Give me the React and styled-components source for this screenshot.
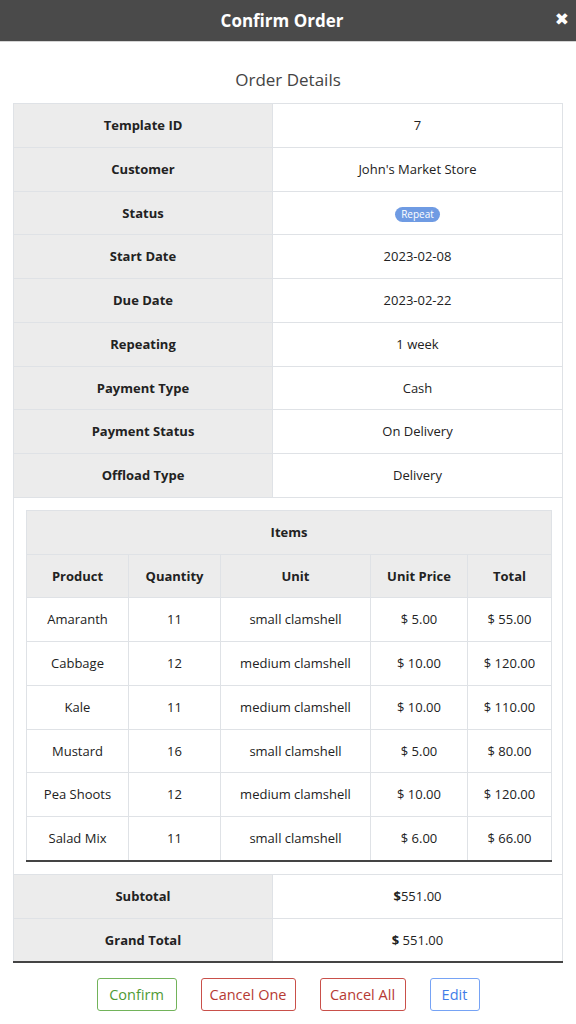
import React from "react";
import styled, { createGlobalStyle } from "styled-components";

const GlobalStyle = createGlobalStyle`
  body {
    margin: 0;
    background: #fff;
    font-family: "Open Sans", "Noto Sans", sans-serif;
    color: #222;
  }
`;

const Header = styled.header`
  position: relative;
  height: 41px;
  display: flex;
  align-items: center;
  justify-content: center;
  padding-right: 12px;
  background: #4a4a4a;
  border-bottom: 1px solid #d4d4d4;
  color: #fff;
  font-size: 17px;
  font-weight: 700;
`;

const Close = styled.button`
  position: absolute;
  right: 7px;
  top: 9px;
  border: none;
  background: none;
  color: #fff;
  font-size: 17px;
  font-weight: 700;
  padding: 0;
  cursor: pointer;
  font-family: "DejaVu Sans", sans-serif;
`;

const Body = styled.div`
  padding: 0 13px;
`;

const Heading = styled.h3`
  margin: 0;
  padding: 26px 0 11px;
  text-align: center;
  font-size: 17px;
  font-weight: 400;
  color: #444;
  line-height: 24px;
`;

const Table = styled.table`
  width: 100%;
  border-collapse: collapse;
  border-bottom: 2px solid #444;
  font-size: 13px;
  table-layout: fixed;
`;

const Cell = styled.td`
  border: 1px solid #dfe2e6;
  padding: 12px 6px;
  line-height: 18.75px;
  text-align: center;
  background: ${p => (p.$head ? "#ececec" : "#fff")};
  font-weight: ${p => (p.$head ? 700 : 400)};
  color: #222;
`;

const ItemsCell = styled.td`
  border: 1px solid #dfe2e6;
  padding: 12px;
`;

const Badge = styled.span`
  display: inline-block;
  background: #6f9be3;
  color: #fff;
  font-size: 10px;
  line-height: 15px;
  padding: 0 6px;
  border-radius: 8px;
  vertical-align: middle;
`;

const Actions = styled.div`
  display: flex;
  justify-content: center;
  gap: 24px;
  padding: 15px 0;
`;

const Button = styled.button`
  width: ${p => p.$w}px;
  height: 33px;
  padding: 0;
  background: #fff;
  border: 1px solid ${p => p.$color};
  color: ${p => p.$text};
  border-radius: 3px;
  font-family: "Open Sans", sans-serif;
  font-size: 14.5px;
  cursor: pointer;
`;

const details = [
  ["Template ID", "7"],
  ["Customer", "John's Market Store"],
  ["Status", <Badge>Repeat</Badge>],
  ["Start Date", "2023-02-08"],
  ["Due Date", "2023-02-22"],
  ["Repeating", "1 week"],
  ["Payment Type", "Cash"],
  ["Payment Status", "On Delivery"],
  ["Offload Type", "Delivery"],
];

const items = [
  ["Amaranth", 11, "small clamshell", "$ 5.00", "$ 55.00"],
  ["Cabbage", 12, "medium clamshell", "$ 10.00", "$ 120.00"],
  ["Kale", 11, "medium clamshell", "$ 10.00", "$ 110.00"],
  ["Mustard", 16, "small clamshell", "$ 5.00", "$ 80.00"],
  ["Pea Shoots", 12, "medium clamshell", "$ 10.00", "$ 120.00"],
  ["Salad Mix", 11, "small clamshell", "$ 6.00", "$ 66.00"],
];

const colWidths = [102, 92, 150, 97, 84];

function ItemsTable() {
  return (
    <Table>
      <colgroup>
        {colWidths.map((w, i) => (
          <col key={i} style={{ width: w }} />
        ))}
      </colgroup>
      <thead>
        <tr>
          <Cell as="th" $head colSpan={5}>Items</Cell>
        </tr>
        <tr>
          {["Product", "Quantity", "Unit", "Unit Price", "Total"].map(h => (
            <Cell as="th" $head key={h}>{h}</Cell>
          ))}
        </tr>
      </thead>
      <tbody>
        {items.map(row => (
          <tr key={row[0]}>
            {row.map((v, i) => (
              <Cell key={i}>{v}</Cell>
            ))}
          </tr>
        ))}
      </tbody>
    </Table>
  );
}

export default function App() {
  return (
    <>
      <GlobalStyle />
      <Header>
        Confirm Order
        <Close>✖</Close>
      </Header>
      <Body>
        <Heading>Order Details</Heading>
        <Table>
          <colgroup>
            <col style={{ width: 259 }} />
            <col />
          </colgroup>
          <tbody>
            {details.map(([k, v]) => (
              <tr key={k}>
                <Cell $head>{k}</Cell>
                <Cell>{v}</Cell>
              </tr>
            ))}
            <tr>
              <ItemsCell colSpan={2}>
                <ItemsTable />
              </ItemsCell>
            </tr>
            <tr>
              <Cell $head>Subtotal</Cell>
              <Cell><b>$</b>551.00</Cell>
            </tr>
            <tr>
              <Cell $head>Grand Total</Cell>
              <Cell><b>$</b> 551.00</Cell>
            </tr>
          </tbody>
        </Table>
        <Actions>
          <Button $w={80} $color="#72b35a" $text="#4f9a34">Confirm</Button>
          <Button $w={95} $color="#c9504a" $text="#b63a33">Cancel One</Button>
          <Button $w={86} $color="#c9504a" $text="#b63a33">Cancel All</Button>
          <Button $w={50} $color="#76a3f5" $text="#3f7de8">Edit</Button>
        </Actions>
      </Body>
    </>
  );
}
